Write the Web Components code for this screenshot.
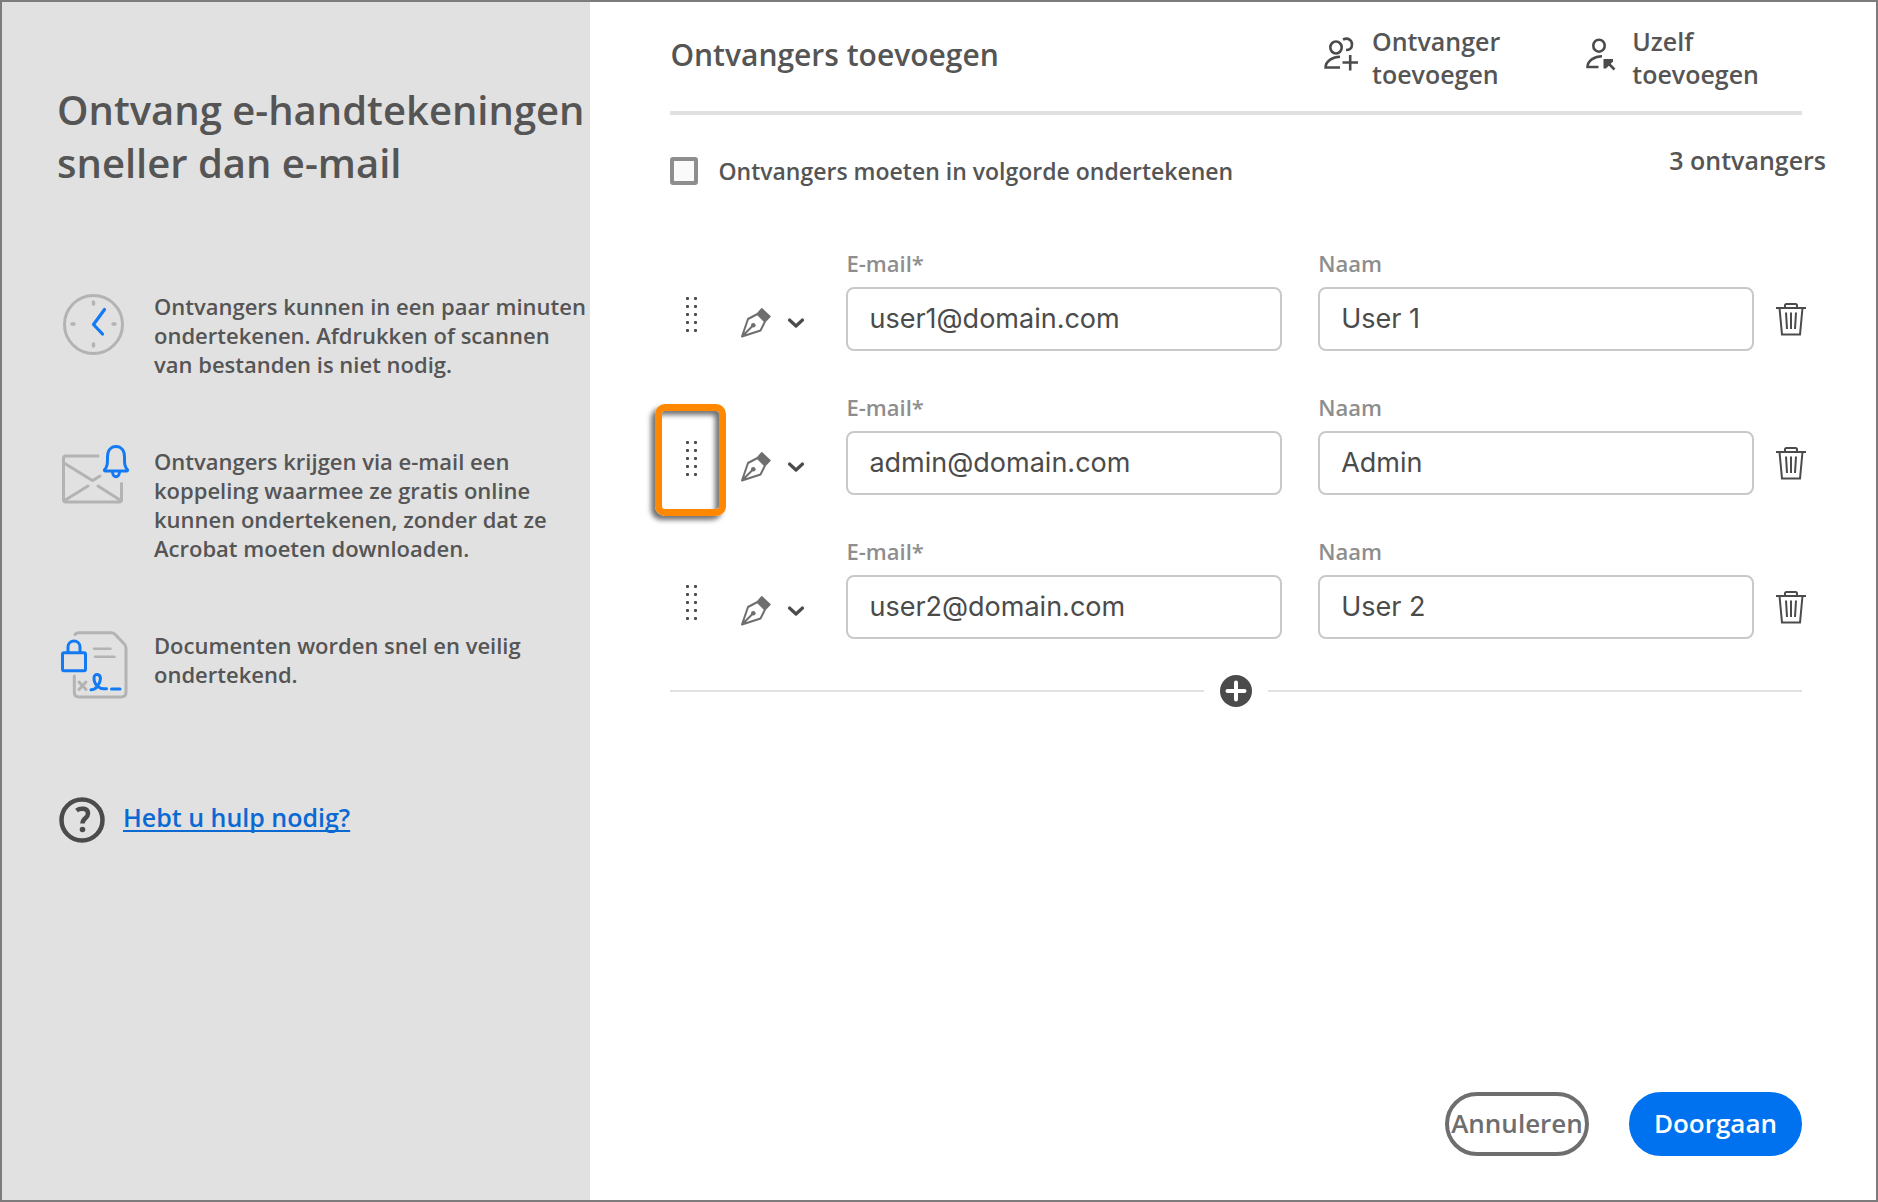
<!DOCTYPE html>
<html lang="nl">
<head>
<meta charset="utf-8">
<meta name="viewport" content="width=device-width, initial-scale=1">
<title>Ontvangers toevoegen</title>
<style>
    body {
        margin: 0;
        font-family: "Open Sans", "Noto Sans", sans-serif;
        font-weight: 600;
        color: #555;
    }
</style>
</head>
<body>
<sign-dialog>
    <info-panel slot="info">
        <span slot="title">Ontvang e-handtekeningen<br>sneller dan e-mail</span>
        <info-item icon="clock">Ontvangers kunnen in een paar minuten<br>ondertekenen. Afdrukken of scannen<br>van bestanden is niet nodig.</info-item>
        <info-item icon="mail">Ontvangers krijgen via e-mail een<br>koppeling waarmee ze gratis online<br>kunnen ondertekenen, zonder dat ze<br>Acrobat moeten downloaden.</info-item>
        <info-item icon="document">Documenten worden snel en veilig<br>ondertekend.</info-item>
        <help-link slot="help">Hebt u hulp nodig?</help-link>
    </info-panel>
    <panel-header>
        Ontvangers toevoegen
        <header-action slot="actions" icon="addPerson">Ontvanger<br>toevoegen</header-action>
        <header-action slot="actions" icon="addSelf">Uzelf<br>toevoegen</header-action>
    </panel-header>
    <order-bar count="3 ontvangers">Ontvangers moeten in volgorde ondertekenen</order-bar>
    <recipient-list></recipient-list>
    <dialog-footer slot="footer"></dialog-footer>
</sign-dialog>

<script>
const icons = {
    clock: `<svg width="80" height="66" viewBox="0 0 80 66" fill="none" stroke="#b3b3b3" stroke-width="3" stroke-linecap="round" stroke-linejoin="round">
        <circle cx="36.5" cy="32.5" r="29"/>
        <path d="M36.5 10v2M36.5 52v2M15 32h2M56 32h2" stroke-width="3.4"/>
        <path d="M47.5 17.5 36.5 32.5l9 9.5" stroke="#147af3" stroke-width="3.2"/>
    </svg>`,
    mail: `<svg width="80" height="66" viewBox="0 0 80 66" fill="none" stroke="#b3b3b3" stroke-width="3" stroke-linecap="round" stroke-linejoin="round">
        <path d="M41 9H9q-2.5 0-2.5 2.500v41Q6.500 55 9 55h53q2.500 0 2.500-2.500V36.500"/>
        <path d="M7 16l27.500 17q1 .7 2 0l6.500-4M7.500 53.500 31 39M41 39l22 14"/>
        <path d="M47.500 22.700c3-3 3-6 3-12.700 0-6.500 3.500-10.500 8.500-10.500S67.500 3.500 67.500 10c0 6.700 0 9.700 3 12.700q.5 1.300-1 1.300h-21q-1.500 0-1-1.300zM55.500 24.500c0 7 7 7 7 0" stroke="#147af3"/>
    </svg>`,
    document: `<svg width="80" height="70" viewBox="0 0 80 70" fill="none" stroke="#b3b3b3" stroke-width="3" stroke-linecap="round" stroke-linejoin="round">
        <path d="M18 3.500q1.500-1.800 4-1.800h32q2.500 0 4 1.500l9.500 10q1.500 1.500 1.500 4V61q0 5-5 5H22q-4.700 0-4.700-5V45"/>
        <path d="M37 17.700h16.500M38 25.700h19.500" stroke-width="2.500"/>
        <path d="M22 51l7 7.500M29 51l-7 7.500"/>
        <g stroke="#147af3">
            <rect x="5.500" y="21.700" width="23" height="18" rx="1.500"/>
            <path d="M11 21.500V16c0-8 12-8 12 0v5.500M34 58.700c5 0 9-5 9.500-11 0-5-6.500-6-6.500-.5 0 6.500 5.500 11.500 12.500 10.500M54.500 58H63"/>
        </g>
    </svg>`,
    help: `<svg width="50" height="46" viewBox="0 0 50 46" fill="none" stroke="#4b4b4b">
        <circle cx="25" cy="23" r="20.500" stroke-width="4.500"/>
        <path d="M19.500 13.500c4-3 11.500-2.500 11.500 3 0 5-5.500 4.500-5.500 10" stroke-width="4.500"/>
        <circle cx="25.500" cy="32.500" r="2.800" fill="#4b4b4b" stroke="none"/>
    </svg>`,
    addPerson: `<svg width="36" height="58" viewBox="0 -7 36 58" fill="none" stroke="#4b4b4b" stroke-width="2.600">
        <ellipse cx="14" cy="11.500" rx="5.700" ry="6"/>
        <path d="M21 3.500c5.500-2.500 9 1 9 5s-2.500 5.500-6 5.500M18 20.700C11 20.700 3.600 25 3.600 31.500H18M20.500 26.500H36M28.200 19v15.500"/>
    </svg>`,
    addSelf: `<svg width="36" height="58" viewBox="0 -7 36 58" fill="none" stroke="#4b4b4b" stroke-width="2.600">
        <ellipse cx="17" cy="9.700" rx="5.700" ry="6"/>
        <path d="M20 20.200C13 20.200 5.500 24.500 5.500 31H16.500M24 25l8.500 8.500"/>
        <path d="M21.500 23H31v2.500L24 32.500h-2.500z" fill="#4b4b4b" stroke="none"/>
    </svg>`,
    handle: `<svg width="43" height="64" viewBox="0 0 43 64" fill="#4b4b4b">
        ${[0, 1, 2, 3, 4].map(i => `<rect x="16" y="${10 + i * 8}" width="3" height="3" rx="1"/><rect x="24" y="${10 + i * 8}" width="3" height="3" rx="1"/>`).join("")}
    </svg>`,
    pen: `<svg width="74" height="64" viewBox="0 0 74 64" fill="none" stroke="#6e6e6e" stroke-width="2">
        <path d="M6 49.500 12 32l9.500-5 7.500 7.500-4.500 9L6 49.500l10.500-10.500" stroke-linejoin="round"/>
        <path d="M25.700 20.700 35 29.500l-5 5.200-9-8.700z" fill="#6e6e6e" stroke="none"/>
        <circle cx="17.300" cy="38.300" r="2.300" fill="#6e6e6e" stroke="none"/>
        <path d="M53.500 33l6.500 6 6.500-6" stroke="#4b4b4b" stroke-width="3.200" stroke-linecap="round" stroke-linejoin="round"/>
    </svg>`,
    trash: `<svg width="30" height="64" viewBox="0 0 30 64" fill="none" stroke="#4b4b4b" stroke-width="2">
        <path d="M0 21h30M9 21v-2.500Q9 17 10.500 17h9Q21 17 21 18.500V21M3.500 21l2.500 26.500h18L26.500 21M10 25.500l1 16.500M15 25.500V42M20 25.500 19 42"/>
    </svg>`,
    plus: `<svg width="32" height="32" viewBox="0 0 32 32">
        <circle cx="16" cy="16" r="16" fill="#4b4b4b"/>
        <path d="M16 7.500v17M7.500 16h17" stroke="#fff" stroke-width="4" stroke-linecap="round"/>
    </svg>`
};

// shared by every element that draws a button or an icon
const baseStyle = `
    svg { display: block; flex: none; overflow: visible; }
    button {
        margin: 0;
        padding: 0;
        border: 0;
        background: none;
        font: inherit;
        color: inherit;
        cursor: pointer;
    }
`;

class SignDialog extends HTMLElement {
    constructor() {
        super();
        this.attachShadow({mode: 'open'}).innerHTML = `
        <style>
            :host {
                display: grid;
                grid-template-columns: minmax(588px, 31.4%) 1fr;
                box-sizing: border-box;
                min-height: 100vh;
                border: 2px solid #7d7b7b;
                background: #fff;
            }

            main {
                display: flex;
                flex-direction: column;
                padding: 0 50px 44px 80px;
            }

            footer {
                margin-top: auto;
            }
        </style>
        <slot name="info"></slot>
        <main>
            <slot></slot>
            <footer><slot name="footer"></slot></footer>
        </main>
        `;
    }
}

class InfoPanel extends HTMLElement {
    constructor() {
        super();
        this.attachShadow({mode: 'open'}).innerHTML = `
        <style>
            :host {
                display: block;
                padding: 81px 0 40px 55px;
                background: #e1e1e1;
                white-space: nowrap;
            }

            h1 {
                margin: 0 0 103px;
                font-size: 40px;
                line-height: 53px;
                font-weight: 600;
            }

            .items {
                display: grid;
                gap: 68px;
                margin-bottom: 106px;
            }
        </style>
        <h1><slot name="title"></slot></h1>
        <div class="items"><slot></slot></div>
        <slot name="help"></slot>
        `;
    }
}

class InfoItem extends HTMLElement {
    connectedCallback() {
        this.attachShadow({mode: 'open'}).innerHTML = `
        <style>
            ${baseStyle}
            :host {
                display: flex;
                gap: 17px;
                font-size: 22px;
                line-height: 29px;
            }

            /* the drawings may be taller than a two-line text */
            .icon { height: 60px; }
        </style>
        <div class="icon">${icons[this.getAttribute('icon')]}</div>
        <div><slot></slot></div>
        `;
    }
}

class HelpLink extends HTMLElement {
    constructor() {
        super();
        this.attachShadow({mode: 'open'}).innerHTML = `
        <style>
            ${baseStyle}
            :host {
                display: flex;
                gap: 16px;
                font-size: 25px;
                line-height: 40px;
            }

            a {
                color: #0a69d3;
                text-decoration-thickness: 2px;
                text-underline-offset: 3px;
                text-decoration-skip-ink: none;
            }
        </style>
        ${icons.help}
        <a href="#help"><slot></slot></a>
        `;
    }
}

class PanelHeader extends HTMLElement {
    constructor() {
        super();
        this.attachShadow({mode: 'open'}).innerHTML = `
        <style>
            :host {
                display: flex;
                justify-content: space-between;
                align-items: flex-start;
                box-sizing: border-box;
                height: 113px;
                margin-right: 24px;
                padding: 23px 43px 0 0;
                border-bottom: 4px solid #e1e1e1;
            }

            h2 {
                margin: 0;
                font-size: 30px;
                line-height: 60px;
                font-weight: 600;
            }

            nav {
                display: flex;
                gap: 82px;
            }
        </style>
        <h2><slot></slot></h2>
        <nav><slot name="actions"></slot></nav>
        `;
    }
}

class HeaderAction extends HTMLElement {
    connectedCallback() {
        this.attachShadow({mode: 'open'}).innerHTML = `
        <style>
            ${baseStyle}
            :host { display: block; }

            button {
                display: flex;
                align-items: center;
                gap: 14px;
                font-size: 25px;
                line-height: 33px;
                text-align: left;
            }
        </style>
        <button type="button">${icons[this.getAttribute('icon')]}<span><slot></slot></span></button>
        `;
    }
}

class OrderBar extends HTMLElement {
    connectedCallback() {
        this.attachShadow({mode: 'open'}).innerHTML = `
        <style>
            :host {
                display: flex;
                justify-content: space-between;
                align-items: flex-start;
                margin: 30px 0 51px;
                font-size: 23px;
                line-height: 30px;
            }

            label {
                display: flex;
                align-items: center;
                gap: 20px;
                height: 52px;
            }

            input {
                appearance: none;
                box-sizing: border-box;
                width: 28px;
                height: 28px;
                margin: 0;
                border: 4px solid #8e8e8e;
                border-radius: 3px;
                background: #fafafa;
            }

            input:checked { background: #8e8e8e; }
            .count { font-size: 25px; }
        </style>
        <label><input type="checkbox" name="order"><slot></slot></label>
        <span class="count">${this.getAttribute('count')}</span>
        `;
    }
}

class RecipientRow extends HTMLElement {
    connectedCallback() {
        this.attachShadow({mode: 'open'}).innerHTML = `
        <style>
            ${baseStyle}
            :host {
                display: grid;
                grid-template-columns: 43px 97px 1fr 1fr 52px;
                align-items: end;
            }

            .handle {
                position: relative;
                cursor: grab;
            }

            :host([marked]) .handle::after {
                content: "";
                position: absolute;
                inset: -27px -13px -21px -15px;
                border: 7px solid #ff8800;
                border-radius: 10px;
                box-shadow: -4px 4px 5px rgba(0, 0, 0, 0.55), inset -4px 4px 5px rgba(0, 0, 0, 0.55);
            }

            .role { margin-left: 23px; }
            .trash { margin-left: 22px; }

            .field {
                display: grid;
                gap: 9px;
                margin-left: 36px;
            }

            label {
                font-size: 22px;
                line-height: 30px;
                color: #8e8e8e;
            }

            input {
                box-sizing: border-box;
                width: 100%;
                height: 64px;
                padding: 0 21px 2px;
                border: 2px solid #c9c9c9;
                border-radius: 8px;
                background: #fff;
                font-family: Inter, sans-serif;
                font-size: 27px;
                color: #4b4b4b;
            }
        </style>
        <button type="button" class="handle" aria-label="Verplaatsen">${icons.handle}</button>
        <button type="button" class="role" aria-label="Rol" aria-haspopup="listbox">${icons.pen}</button>
        <div class="field">
            <label for="email">E-mail*</label>
            <input id="email" type="email">
        </div>
        <div class="field">
            <label for="name">Naam</label>
            <input id="name" type="text">
        </div>
        <button type="button" class="trash" aria-label="Verwijderen">${icons.trash}</button>
        `;
        this.shadowRoot.querySelector("#email").value = this.getAttribute('email');
        this.shadowRoot.querySelector("#name").value = this.getAttribute('name');
        this.shadowRoot.querySelector(".trash").addEventListener('click', () => this.remove());
    }
}

class RecipientList extends HTMLElement {
    constructor() {
        super();
        this.attachShadow({mode: 'open'});
        this.list = [
            {email: "user1@domain.com", name: "User 1"},
            {email: "admin@domain.com", name: "Admin", marked: true},
            {email: "user2@domain.com", name: "User 2"}
        ];
    }

    connectedCallback() {
        this.shadowRoot.innerHTML = `
        <style>
            ${baseStyle}
            :host { display: block; }

            #rows {
                display: grid;
                gap: 41px;
                margin-right: 20px;
            }

            .add {
                display: grid;
                grid-template-columns: 1fr 32px 1fr;
                align-items: center;
                gap: 16px;
                margin: 36px 24px 36px 0;
            }

            .line {
                height: 2px;
                background: #e1e1e1;
            }
        </style>
        <div id="rows"></div>
        <div class="add">
            <span class="line"></span>
            <button type="button" aria-label="Ontvanger toevoegen">${icons.plus}</button>
            <span class="line"></span>
        </div>
        `;
        const rows = this.shadowRoot.querySelector("#rows");
        const addRow = item => {
            const row = document.createElement('recipient-row');
            row.setAttribute('email', item.email);
            row.setAttribute('name', item.name);
            row.toggleAttribute('marked', !!item.marked);
            rows.appendChild(row);
        };
        this.list.forEach(addRow);
        this.shadowRoot.querySelector(".add button").addEventListener('click', () => addRow({email: "", name: ""}));
    }
}

class DialogFooter extends HTMLElement {
    constructor() {
        super();
        this.attachShadow({mode: 'open'}).innerHTML = `
        <style>
            ${baseStyle}
            :host {
                display: flex;
                justify-content: flex-end;
                gap: 40px;
                margin-right: 24px;
            }

            button {
                box-sizing: border-box;
                min-width: 144px;
                height: 64px;
                padding-bottom: 3px;
                border: 4px solid #6e6e6e;
                border-radius: 32px;
                font-size: 26px;
                line-height: 36px;
                color: #6e6e6e;
            }

            .primary {
                min-width: 173px;
                border-color: #0072f0;
                background: #0072f0;
                color: #fff;
            }
        </style>
        <button type="button">Annuleren</button>
        <button type="button" class="primary">Doorgaan</button>
        `;
    }
}

customElements.define('sign-dialog', SignDialog);
customElements.define('info-panel', InfoPanel);
customElements.define('info-item', InfoItem);
customElements.define('help-link', HelpLink);
customElements.define('panel-header', PanelHeader);
customElements.define('header-action', HeaderAction);
customElements.define('order-bar', OrderBar);
customElements.define('recipient-row', RecipientRow);
customElements.define('recipient-list', RecipientList);
customElements.define('dialog-footer', DialogFooter);
</script>
</body>
</html>
